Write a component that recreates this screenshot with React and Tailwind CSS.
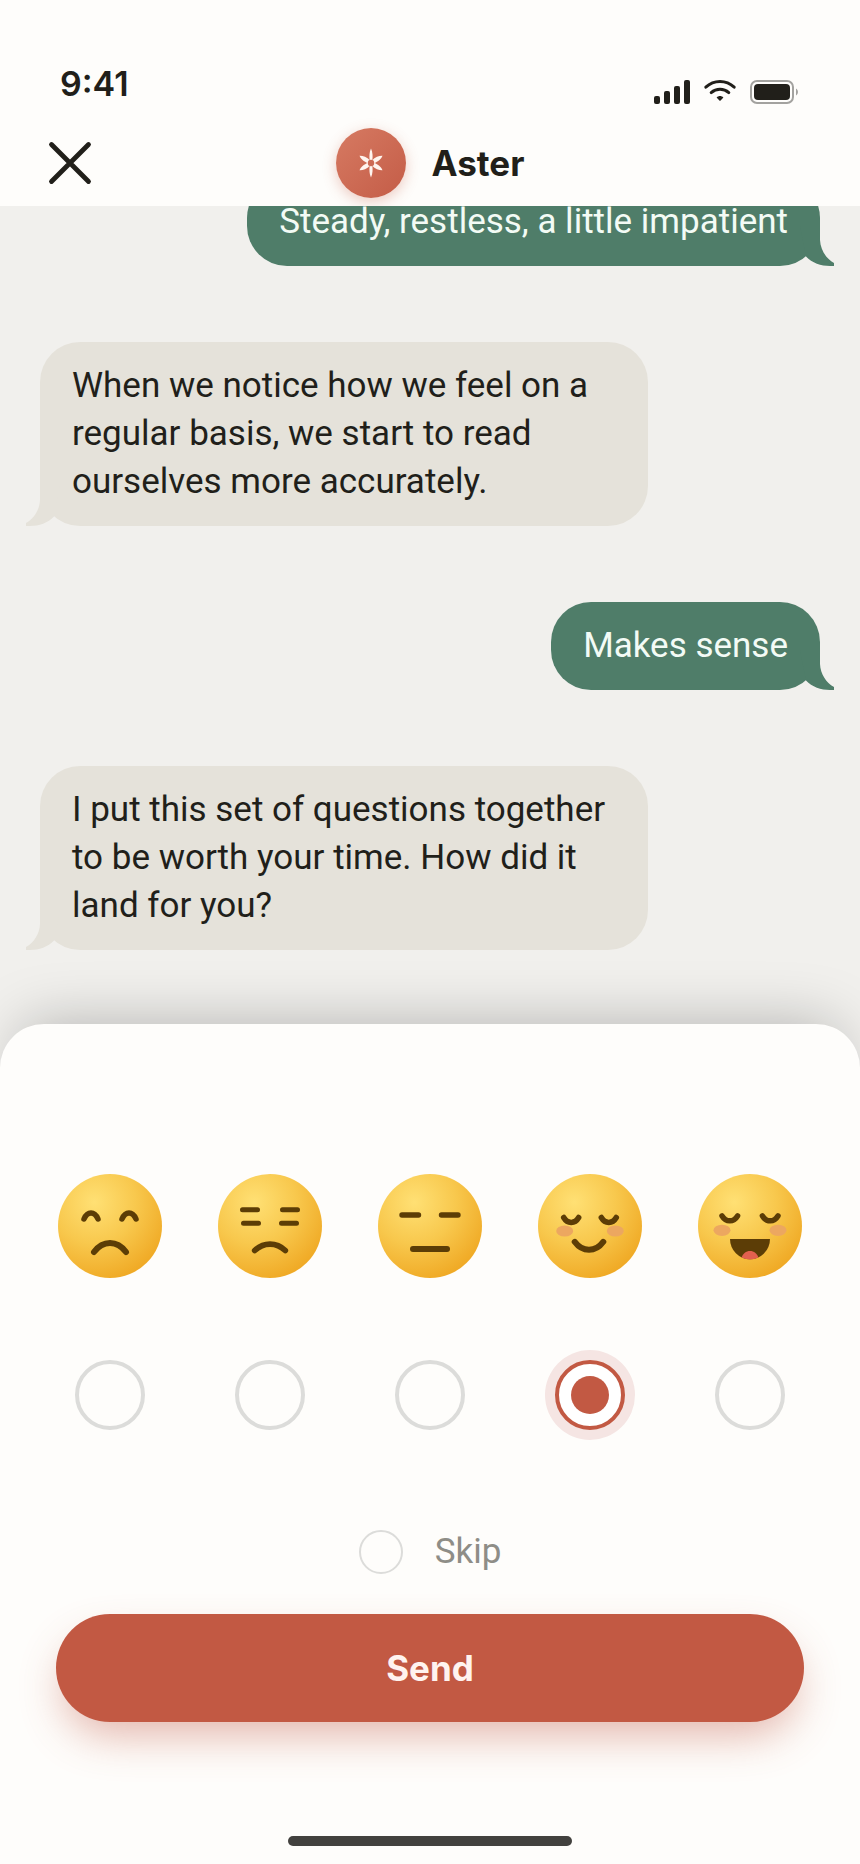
import React, { useState } from 'react';

const messages = [
  { id: 1, from: 'me', text: 'Steady, restless, a little impatient' },
  { id: 2, from: 'aster', text: 'When we notice how we feel on a regular basis, we start to read ourselves more accurately.' },
  { id: 3, from: 'me', text: 'Makes sense' },
  { id: 4, from: 'aster', text: 'I put this set of questions together to be worth your time. How did it land for you?' },
];

const moods = [
  {
    value: 'awful',
    label: 'Awful',
    face: (
      <>
        <path d="M26 45C29.5 37 36.5 37 40 45M64 45C67.5 37 74.5 37 78 45" strokeWidth="5.5" />
        <path d="M36 78C45 66 59 66 68 78" strokeWidth="6" />
      </>
    ),
  },
  {
    value: 'bad',
    label: 'Bad',
    face: (
      <>
        <path d="M24.5 35.7H39.5M64.5 35.7H79.5M25.5 49.3H40.5M63.5 49.3H78.5" strokeWidth="5" />
        <path d="M36.7 76.5C45.5 68 58.5 68 67.3 76.5" strokeWidth="5.7" />
      </>
    ),
  },
  {
    value: 'okay',
    label: 'Okay',
    face: (
      <>
        <path d="M24 41H40.5M63.5 41H80" strokeWidth="5.4" />
        <path d="M35 75H69" strokeWidth="6" />
      </>
    ),
  },
  {
    value: 'good',
    label: 'Good',
    face: (
      <>
        <Cheeks left={26.7} right={77.3} y={57} />
        <path d="M25.7 43.5C29.5 50 36.9 50 40.7 43.5M63.3 43.5C67.1 50 74.5 50 78.3 43.5" strokeWidth="5.5" />
        <path d="M36.7 67.8C44.5 78.5 57.5 78.5 65.3 67.8" strokeWidth="6" />
      </>
    ),
  },
  {
    value: 'great',
    label: 'Great',
    face: (
      <>
        <Cheeks left={24} right={80} y={56.3} />
        <path d="M24 41.8C27.9 48.5 35.7 48.5 39.6 41.8M64.4 41.8C68.3 48.5 76.1 48.5 80 41.8" strokeWidth="5.5" />
        <path d="M32 65H72A20 20.3 0 0 1 32 65Z" fill="#5c3d06" stroke="none" />
        <path d="M43.6 83.5C45 79.5 48 77 52 77C56 77 59 79.5 60.4 83.5C55 86 49 86 43.6 83.5Z" fill="#e2604f" stroke="none" />
      </>
    ),
  },
];

function Cheeks({ left, right, y }) {
  return (
    <g fill="#eca760" stroke="none">
      <ellipse cx={left} cy={y} rx="8.5" ry="5.6" />
      <ellipse cx={right} cy={y} rx="8.5" ry="5.6" />
    </g>
  );
}

function Face({ id, children }) {
  return (
    <svg viewBox="0 0 104 104" className="size-[104px]" fill="none" stroke="#5c3d06" strokeLinecap="round" aria-hidden="true">
      <defs>
        <radialGradient id={`face-${id}`} cx="0.35" cy="0.27" r="0.8">
          <stop offset="0" stopColor="#ffe074" />
          <stop offset="0.5" stopColor="#f8c84d" />
          <stop offset="1" stopColor="#efa722" />
        </radialGradient>
      </defs>
      <circle cx="52" cy="52" r="52" fill={`url(#face-${id})`} stroke="none" />
      {children}
    </svg>
  );
}

function StatusBar() {
  return (
    <div className="flex h-12 items-center justify-between pr-[62px] pl-[60px]">
      <span className="font-['Inter',sans-serif] text-[34px] leading-12 font-semibold">9:41</span>
      <svg viewBox="0 0 144 24" className="mb-1 h-6 w-36 self-end" fill="currentColor" aria-hidden="true">
        {/* signal */}
        <rect x="0" y="16" width="6" height="8" rx="2" />
        <rect x="10" y="11" width="6" height="13" rx="2" />
        <rect x="20" y="6" width="6" height="18" rx="2" />
        <rect x="30" y="0" width="6" height="24" rx="2" />
        {/* wifi */}
        <g fill="none" stroke="currentColor" strokeWidth="3" strokeLinecap="round">
          <path d="M51.8 7.2C60 -0.4 72 -0.4 80.2 7.2" />
          <path d="M57.2 12.6C62.2 8.2 69.8 8.2 74.8 12.6" />
        </g>
        <path d="M62.6 17.6C64.6 15.6 67.4 15.6 69.4 17.6L66.6 20.6Q66 21.1 65.4 20.6Z" />
        {/* battery */}
        <rect x="97" y="1" width="42" height="22" rx="6" fill="none" stroke="#a3a29f" strokeWidth="2" />
        <rect x="100" y="4" width="36" height="16" rx="4" />
        <path d="M142 8.5C144.6 10 144.6 14 142 15.5Z" fill="#a3a29f" />
      </svg>
    </div>
  );
}

function Avatar() {
  return (
    <span className="flex size-[70px] items-center justify-center rounded-full bg-linear-to-br from-[#d67a62] to-[#c45c47] shadow-[0_4px_14px_rgba(194,89,67,0.3)]">
      <svg viewBox="-15 -15 30 30" className="size-[30px]" fill="#fff5ef" aria-hidden="true">
        {[0, 180].map((deg) => (
          <path key={deg} d="M0 -14.5C1.6 -11 2 -7 1.2 -2H-1.2C-2 -7 -1.6 -11 0 -14.5Z" transform={`rotate(${deg})`} />
        ))}
        {[58, 122, 238, 302].map((deg) => (
          <path key={deg} d="M0 -13.6C1.8 -11 3 -7 1.6 -2H-1.6C-3 -7 -1.8 -11 0 -13.6Z" transform={`rotate(${deg})`} />
        ))}
        <circle r="3.2" fill="#cd6b55" />
      </svg>
    </span>
  );
}

function Header() {
  return (
    <header className="bg-[#fefdfb] pt-[60px]">
      <StatusBar />
      <div className="grid grid-cols-[1fr_auto_1fr] items-center px-12 pt-5 pb-2">
        <button type="button" aria-label="Close" className="w-11">
          <svg viewBox="0 0 44 44" className="size-11" fill="none" stroke="currentColor" strokeWidth="4.8" strokeLinecap="round" aria-hidden="true">
            <path d="M3.5 3.5L40.5 40.5M40.5 3.5L3.5 40.5" />
          </svg>
        </button>
        <div className="flex items-center gap-[26px]">
          <Avatar />
          <h1 className="font-['Inter',sans-serif] text-[35px] leading-12 font-bold">Aster</h1>
        </div>
      </div>
    </header>
  );
}

function Bubble({ from, text }) {
  const mine = from === 'me';
  return (
    <li
      className={
        mine
          ? 'relative shrink-0 self-end rounded-[40px] bg-[#4f7d69] px-8 py-5 text-[#f3fbf5]'
          : 'relative max-w-[608px] shrink-0 self-start rounded-[40px] bg-[#e5e2da] px-8 py-5'
      }
    >
      {text}
      <svg
        viewBox="0 0 34 40"
        className={
          mine
            ? 'absolute -right-3.5 bottom-0 h-10 w-[34px] text-[#4f7d69]'
            : 'absolute bottom-0 -left-3.5 h-10 w-[34px] -scale-x-100 text-[#e5e2da]'
        }
        fill="currentColor"
        aria-hidden="true"
      >
        <path d="M20 0V14C20.5 24 26 32.5 34 37V40H30C21 40 12 37 6 30.5L0 0Z" />
      </svg>
    </li>
  );
}

const App = () => {
  const [mood, setMood] = useState('good');
  const [skip, setSkip] = useState(false);

  const handleSubmit = (e) => {
    e.preventDefault();
  };

  return (
    <div className="flex h-screen flex-col bg-[#f1f0ed] font-['Roboto','Liberation_Sans',sans-serif] text-[#211f1a]">
      <Header />

      <main className="flex min-h-0 flex-1 flex-col justify-end overflow-hidden px-10 pb-[74px]">
        <ul className="flex flex-col gap-[76px] text-[35px] leading-12">
          {messages.map((m) => (
            <Bubble key={m.id} from={m.from} text={m.text} />
          ))}
        </ul>
      </main>

      <form
        onSubmit={handleSubmit}
        className="relative flex flex-col rounded-t-[44px] bg-[#fefdfb] pt-[150px] pb-[18px] shadow-[0_-20px_60px_-20px_rgba(0,0,0,0.26)]"
      >
        <fieldset className="grid grid-cols-5 px-[30px]">
          {moods.map((m) => (
            <label key={m.value} className="flex flex-col items-center gap-[82px]">
              <Face id={m.value}>{m.face}</Face>
              <input
                type="radio"
                name="mood"
                aria-label={m.label}
                value={m.value}
                checked={mood === m.value}
                onChange={() => setMood(m.value)}
                className="grid size-[70px] appearance-none place-content-center rounded-full border-4 border-[#dcdcda] before:size-[38px] before:rounded-full checked:border-[#c25943] checked:bg-white checked:shadow-[0_0_0_10px_#f5e5e3] checked:before:bg-[#c25943]"
              />
            </label>
          ))}
        </fieldset>

        <label className="mt-[98px] flex items-center gap-8 self-center text-[35px] leading-12 text-[#8e8d87]">
          <input
            type="checkbox"
            checked={skip}
            onChange={(e) => setSkip(e.target.checked)}
            className="size-11 appearance-none rounded-full border-2 border-[#dcdcda] checked:bg-[#c25943]"
          />
          Skip
        </label>

        <button
          type="submit"
          className="mx-14 mt-[38px] h-[108px] rounded-full bg-[#c25943] font-['Inter',sans-serif] text-[35px] font-bold text-[#fff3ef] shadow-[0_20px_44px_-8px_rgba(194,89,67,0.45)]"
        >
          Send
        </button>

        <div className="mt-[114px] h-2.5 w-[284px] self-center rounded-full bg-[#42413e]" />
      </form>
    </div>
  );
};

export default App;
